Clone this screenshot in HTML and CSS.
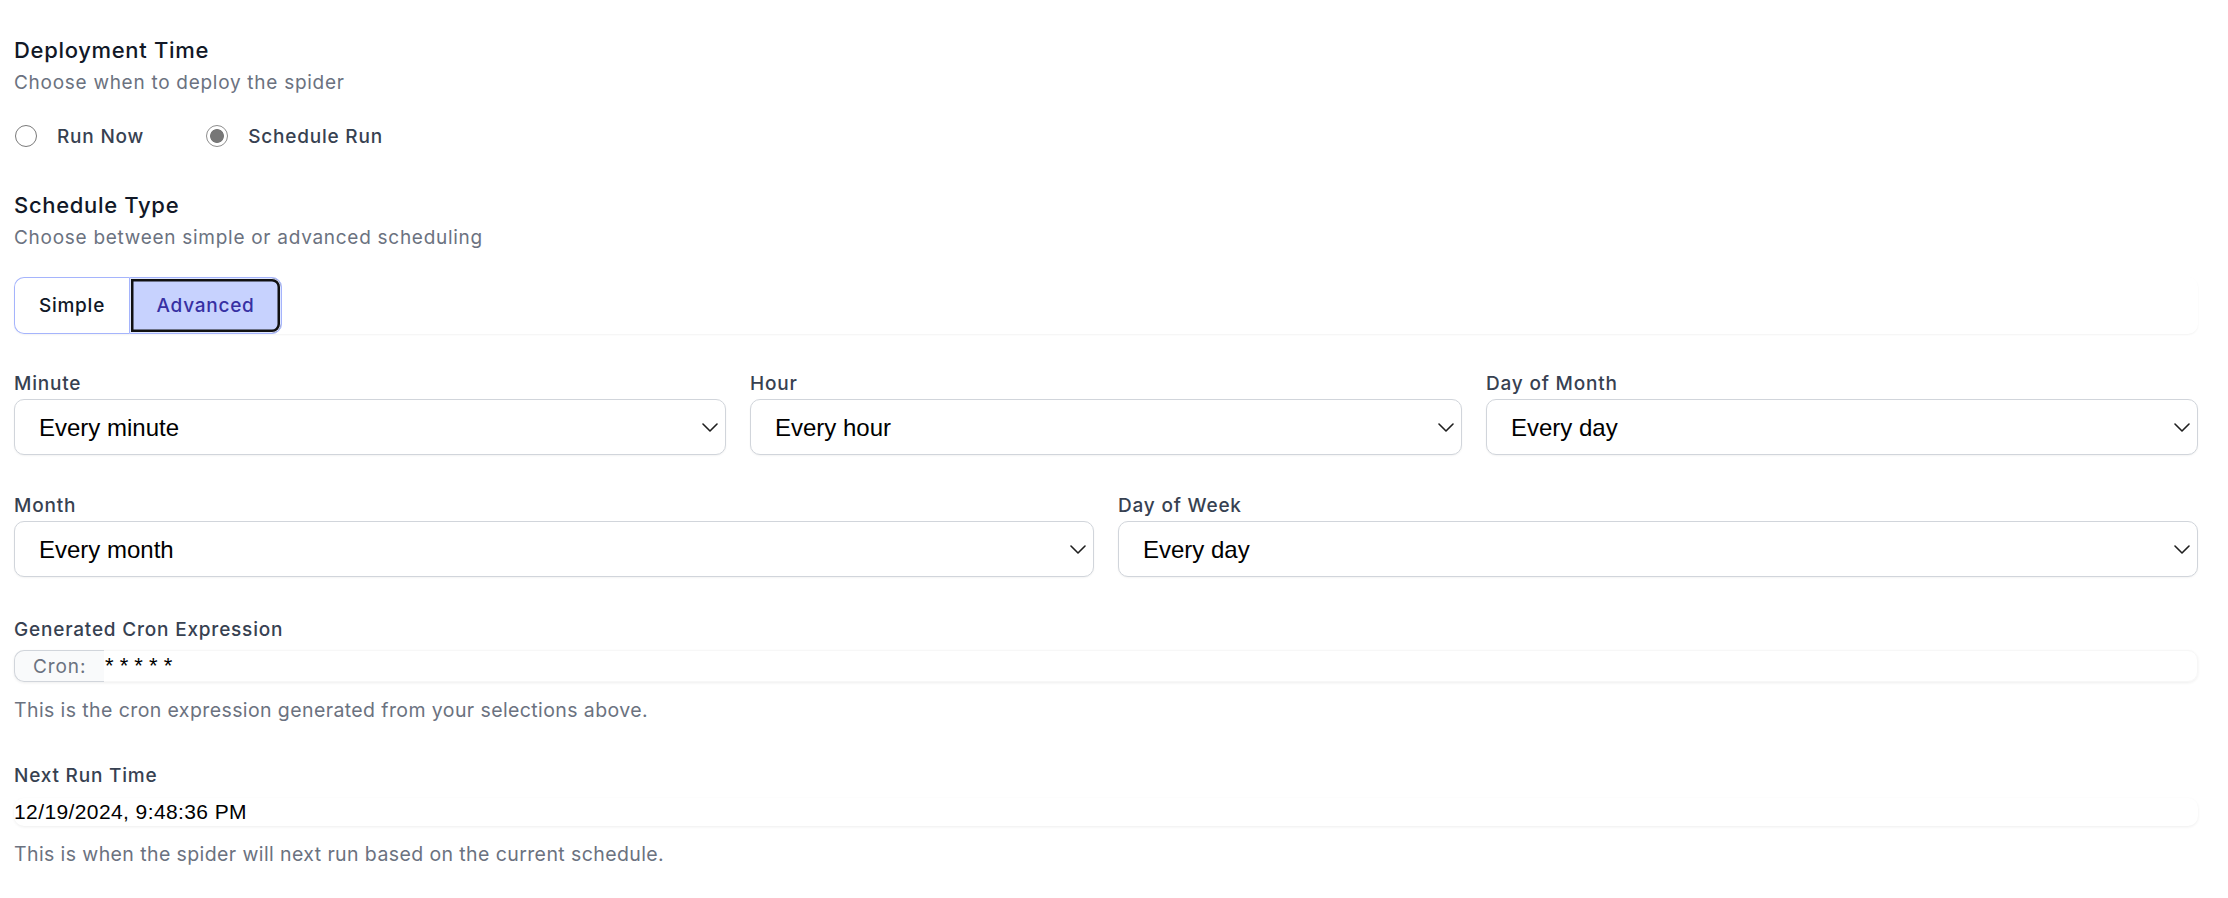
FILE: index.html
```html
<!DOCTYPE html>
<html lang="en">
<head>
<meta charset="utf-8">
<title>Deployment Time</title>
<link rel="stylesheet" href="styles.css">
</head>
<body>
<div class="page">
  <section class="section">
    <h2 class="title">Deployment Time</h2>
    <p class="subtitle">Choose when to deploy the spider</p>
    <div class="radios">
      <label class="radio"><input type="radio" name="deploy"><span>Run Now</span></label>
      <label class="radio"><input type="radio" name="deploy" checked><span>Schedule Run</span></label>
    </div>
  </section>

  <section class="section schedule">
    <h2 class="title">Schedule Type</h2>
    <p class="subtitle">Choose between simple or advanced scheduling</p>
    <div class="toggle-bar">
      <button class="seg seg-simple" type="button">Simple</button>
      <button class="seg seg-adv" type="button">Advanced</button>
    </div>
  </section>

  <div class="grid grid-3">
    <div class="field">
      <label class="label">Minute</label>
      <div class="select-wrap">
        <select class="select"><option>Every minute</option></select>
        <svg class="chev" viewBox="0 0 16 9" width="16" height="9"><path d="M1 1l7 7 7-7" fill="none" stroke="#1f1f1f" stroke-width="1.6" stroke-linecap="round" stroke-linejoin="round"/></svg>
      </div>
    </div>
    <div class="field">
      <label class="label">Hour</label>
      <div class="select-wrap">
        <select class="select"><option>Every hour</option></select>
        <svg class="chev" viewBox="0 0 16 9" width="16" height="9"><path d="M1 1l7 7 7-7" fill="none" stroke="#1f1f1f" stroke-width="1.6" stroke-linecap="round" stroke-linejoin="round"/></svg>
      </div>
    </div>
    <div class="field">
      <label class="label">Day of Month</label>
      <div class="select-wrap">
        <select class="select"><option>Every day</option></select>
        <svg class="chev" viewBox="0 0 16 9" width="16" height="9"><path d="M1 1l7 7 7-7" fill="none" stroke="#1f1f1f" stroke-width="1.6" stroke-linecap="round" stroke-linejoin="round"/></svg>
      </div>
    </div>
  </div>

  <div class="grid grid-2">
    <div class="field">
      <label class="label">Month</label>
      <div class="select-wrap">
        <select class="select"><option>Every month</option></select>
        <svg class="chev" viewBox="0 0 16 9" width="16" height="9"><path d="M1 1l7 7 7-7" fill="none" stroke="#1f1f1f" stroke-width="1.6" stroke-linecap="round" stroke-linejoin="round"/></svg>
      </div>
    </div>
    <div class="field">
      <label class="label">Day of Week</label>
      <div class="select-wrap">
        <select class="select"><option>Every day</option></select>
        <svg class="chev" viewBox="0 0 16 9" width="16" height="9"><path d="M1 1l7 7 7-7" fill="none" stroke="#1f1f1f" stroke-width="1.6" stroke-linecap="round" stroke-linejoin="round"/></svg>
      </div>
    </div>
  </div>

  <div class="field cron-field">
    <label class="label">Generated Cron Expression</label>
    <div class="cron-box">
      <span class="addon">Cron:</span>
      <span class="cron-value">* * * * *</span>
    </div>
    <p class="help">This is the cron expression generated from your selections above.</p>
  </div>

  <div class="field next-field">
    <label class="label">Next Run Time</label>
    <div class="next-box">12/19/2024, 9:48:36 PM</div>
    <p class="help">This is when the spider will next run based on the current schedule.</p>
  </div>
</div>
</body>
</html>
```

FILE: styles.css
```css
* { box-sizing: border-box; }
html, body { margin: 0; padding: 0; background: #ffffff; }
body { font-family: Inter, "Noto Sans", sans-serif; color: #111827; }

.page { padding: 36px 30px 0 14px; }

.title {
  margin: 0;
  font-size: 22px;
  line-height: 28px;
  font-weight: 500;
  letter-spacing: 0.68px;
  color: #111827;
}
.subtitle {
  margin: 7px 0 0;
  font-size: 19px;
  line-height: 24px;
  letter-spacing: 0.72px;
  color: #6b7280;
}

.radios { display: flex; align-items: center; gap: 61px; margin-top: 27px; height: 28px; }
.radio {
  display: flex; align-items: center; gap: 20px;
  font-size: 19px; font-weight: 500; letter-spacing: 0.8px; color: #374151;
}
.radio input {
  appearance: none; -webkit-appearance: none;
  margin: 0 0 0 1px; width: 22px; height: 22px; border-radius: 50%;
  border: 1.5px solid #7a7a7a; background: #fff;
}
.radio input:checked {
  border-color: #8e8e8e;
  background: radial-gradient(circle, #777777 0 6.5px, #ffffff 7.3px);
}

.schedule { margin-top: 41px; }

.toggle-bar {
  display: flex; margin-top: 27px; height: 57px;
  border-radius: 10px;
  box-shadow: 0 1px 2px rgba(0,0,0,0.05);
}
.seg {
  font-family: Inter, sans-serif; font-size: 19px; font-weight: 500; letter-spacing: 0.75px;
  height: 57px; padding: 0; background: #fff; border: 1px solid #a5b4fc; cursor: pointer;
}
.seg-simple { width: 115px; border-right: none; border-radius: 10px 0 0 10px; color: #111827; }
.seg-adv {
  width: 153px; border-radius: 0 10px 10px 0; background: #c7d2fe; color: #3730a3;
  box-shadow: inset 0 0 0 1px #e0e7ff, inset 0 0 0 3.5px #111111;
}

.grid { display: grid; gap: 24px; }
.grid-3 { grid-template-columns: repeat(3, 1fr); margin-top: 38px; }
.grid-2 { grid-template-columns: repeat(2, 1fr); margin-top: 39px; }

.field { display: flex; flex-direction: column; }
.label {
  font-size: 19px; line-height: 24px; font-weight: 500; letter-spacing: 0.8px; color: #374151;
}
.select-wrap { position: relative; margin-top: 3px; }
.select {
  appearance: none; -webkit-appearance: none;
  width: 100%; height: 56px; margin: 0;
  padding: 0 40px 0 24px;
  font-family: "Liberation Sans", Arial, sans-serif; font-size: 24px; color: #000;
  background: #fff; border: 1px solid #d1d5db; border-radius: 10px;
  box-shadow: 0 1px 2px rgba(0,0,0,0.05);
}
.chev { position: absolute; right: 8px; top: 24px; }

.cron-field { margin-top: 41px; }
.cron-box {
  display: flex; align-items: center; height: 32px; margin-top: 8px;
  border-radius: 10px; box-shadow: 0 1px 3px rgba(0,0,0,0.07); border: 1px solid #f7f7f7;
}
.addon {
  display: flex; align-items: center; height: 32px; width: 90px; padding-left: 18px;
  margin-left: -1px;
  font-family: Inter, sans-serif; font-size: 19px; letter-spacing: 0.9px; color: #6b7280;
  background: #f9fafb; border: 1px solid #d1d5db; border-right: none; border-radius: 10px 0 0 10px;
}
.cron-value { font-family: "Liberation Sans", Arial, sans-serif; font-size: 22px; color: #000; padding-left: 1px; }

.help { margin: 16px 0 0; font-size: 19.5px; line-height: 24px; letter-spacing: 0.4px; color: #6b7280; }

.next-field { margin-top: 42px; }
.next-box {
  height: 28px; margin-top: 10px; display: flex; align-items: center;
  font-family: "Liberation Sans", Arial, sans-serif; font-size: 21px; letter-spacing: 0.4px; color: #000;
  border-radius: 10px; box-shadow: 0 1px 3px rgba(0,0,0,0.07);
}
.next-field .help { margin-top: 16px; }
```
